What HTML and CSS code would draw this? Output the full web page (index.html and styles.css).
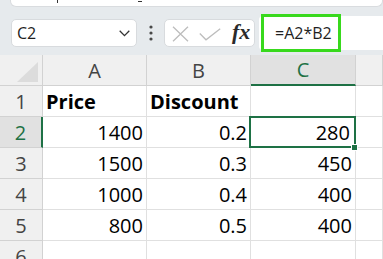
FILE: index.html
```html
<!DOCTYPE html>
<html>
<head>
<meta charset="utf-8">
<link rel="stylesheet" href="styles.css">
</head>
<body>
<div class="toolbar">
  <div class="top-panel"><span class="mark mark-a"></span><span class="mark mark-b"></span></div>
  <div class="bar">
    <div class="namebox">
      <span class="name">C2</span>
      <svg class="chev" width="11" height="7" viewBox="0 0 11 7"><polyline points="0.7,0.8 5.5,5.6 10.3,0.8" fill="none" stroke="#333" stroke-width="1.3"/></svg>
    </div>
    <svg class="dots" width="4" height="16" viewBox="0 0 4 16"><circle cx="2" cy="2" r="1.6" fill="#484848"/><circle cx="2" cy="8" r="1.6" fill="#484848"/><circle cx="2" cy="14" r="1.6" fill="#484848"/></svg>
    <div class="fxbox">
      <svg class="ico-x" width="17" height="16" viewBox="0 0 17 16"><path d="M1 0.7 L16 15.3 M16 0.7 L1 15.3" stroke="#bdbdbd" stroke-width="1.3" fill="none"/></svg>
      <svg class="ico-check" width="22" height="13" viewBox="0 0 22 13"><polyline points="0.8,5.5 7,11.8 21.2,0.8" stroke="#bdbdbd" stroke-width="1.3" fill="none"/></svg>
      <span class="fx">fx</span>
    </div>
    <div class="formula">
      <div class="highlight">=A2*B2</div>
    </div>
  </div>
</div>
<div class="grid">
  <div class="corner"><span class="tri"></span></div>
  <div class="colhead">A</div>
  <div class="colhead">B</div>
  <div class="colhead sel">C</div>
  <div class="colhead"></div>

  <div class="rowhead">1</div>
  <div class="cell bold">Price</div>
  <div class="cell bold">Discount</div>
  <div class="cell"></div>
  <div class="cell"></div>

  <div class="rowhead sel">2</div>
  <div class="cell num">1400</div>
  <div class="cell num">0.2</div>
  <div class="cell num active">280</div>
  <div class="cell"></div>

  <div class="rowhead">3</div>
  <div class="cell num">1500</div>
  <div class="cell num">0.3</div>
  <div class="cell num">450</div>
  <div class="cell"></div>

  <div class="rowhead">4</div>
  <div class="cell num">1000</div>
  <div class="cell num">0.4</div>
  <div class="cell num">400</div>
  <div class="cell"></div>

  <div class="rowhead">5</div>
  <div class="cell num">800</div>
  <div class="cell num">0.5</div>
  <div class="cell num">400</div>
  <div class="cell"></div>

  <div class="rowhead">6</div>
  <div class="cell"></div>
  <div class="cell"></div>
  <div class="cell"></div>
  <div class="cell"></div>
</div>
</body>
</html>
```
FILE: styles.css
```css
html, body {
  margin: 0;
  padding: 0;
  width: 383px;
  height: 259px;
  overflow: hidden;
  background: #ffffff;
  font-family: "Open Sans", "Noto Sans", sans-serif;
}

.toolbar {
  height: 55px;
  background: #e6eaed;
  box-sizing: border-box;
  overflow: hidden;
}

.top-panel {
  box-sizing: border-box;
  margin-left: 10px;
  width: 373px;
  height: 7px;
  background: #ffffff;
  border: 1px solid #d9dcdf;
  border-top: none;
  border-radius: 0 0 6px 6px;
  display: flex;
  align-items: flex-start;
}

.mark {
  display: block;
  background: #333;
}
.mark-a {
  margin-left: 46px;
  width: 1px;
  height: 3px;
}
.mark-b {
  margin-left: 80px;
  margin-top: 1px;
  width: 4px;
  height: 1px;
}

.bar {
  display: flex;
  align-items: center;
  height: 38px;
  margin-top: 7px;
  padding-left: 11px;
}

.namebox {
  box-sizing: border-box;
  width: 126px;
  height: 28px;
  background: #ffffff;
  border: 1px solid #d8dbde;
  border-radius: 5px;
  display: flex;
  align-items: center;
  justify-content: space-between;
  padding: 0 6px 0 5px;
}

.name {
  font-size: 16px;
  color: #1f1f1f;
}

.chev {
  margin-top: 1px;
}

.dots {
  margin-left: 12px;
  margin-right: 11px;
}

.fxbox {
  box-sizing: border-box;
  width: 91px;
  height: 28px;
  background: #ffffff;
  border: 1px solid #d8dbde;
  border-radius: 5px;
  display: flex;
  align-items: center;
  padding-left: 7px;
}

.ico-x {
  margin-top: 1px;
}

.ico-check {
  margin-left: 10px;
  margin-top: 2px;
}

.fx {
  margin-left: 11px;
  font-family: "Liberation Serif", "DejaVu Serif", serif;
  font-style: italic;
  font-weight: 700;
  font-size: 22px;
  line-height: 1;
  color: #2a2a2a;
  margin-top: -3px;
}

.formula {
  flex: 1;
  height: 34px;
  margin-left: 4px;
  background: #ffffff;
  border-radius: 4px 0 0 4px;
  display: flex;
  align-items: center;
}

.highlight {
  box-sizing: border-box;
  flex: none;
  width: 80px;
  height: 38px;
  margin-left: 2px;
  border: 3px solid #38d91d;
  display: flex;
  align-items: center;
  padding-left: 11px;
  font-size: 16px;
  color: #1f1f1f;
}

.grid {
  display: grid;
  grid-template-columns: 43px 104px 104px 105px 27px;
  grid-auto-rows: 31px;
}

.grid > div {
  box-sizing: border-box;
  border-right: 1px solid #e0e0e0;
  border-bottom: 1px solid #e0e0e0;
  display: flex;
  align-items: center;
}

.corner {
  background: #f0f0f0;
  position: relative;
  justify-content: flex-end;
  align-items: flex-end !important;
  border-right-color: #d2d2d2 !important;
  border-bottom-color: #d2d2d2 !important;
  padding: 0 4px 3px 0;
}

.tri {
  display: block;
  width: 0;
  height: 0;
  border-left: 21px solid transparent;
  border-bottom: 20px solid #dcdcdc;
}

.colhead {
  background: #f0f0f0;
  justify-content: center;
  font-size: 20px;
  color: #444444;
  border-right-color: #d2d2d2 !important;
  border-bottom-color: #d2d2d2 !important;
}

.colhead.sel {
  background: #e1e1e1;
  color: #1e7145;
  border-bottom: 2px solid #1e7145 !important;
}

.rowhead {
  background: #f0f0f0;
  justify-content: center;
  font-size: 20px;
  color: #444444;
  border-right-color: #d2d2d2 !important;
  border-bottom-color: #d2d2d2 !important;
}

.rowhead.sel {
  background: #e1e1e1;
  color: #1e7145;
  border-right: 2px solid #1e7145 !important;
}

.cell {
  font-size: 20px;
  color: #000000;
  padding: 0 3px;
  white-space: nowrap;
}

.cell.bold {
  font-weight: 700;
  padding-left: 3px;
}

.cell.num {
  justify-content: flex-end;
  padding-right: 3px;
}

.cell.active {
  position: relative;
  padding-right: 5px;
}

.cell.active::after {
  content: "";
  position: absolute;
  left: -2px;
  right: -1px;
  top: -1px;
  bottom: -1px;
  border: 2px solid #1e7145;
}

.cell.active::before {
  content: "";
  position: absolute;
  right: -3px;
  bottom: -4px;
  width: 5px;
  height: 5px;
  background: #1e7145;
  border: 1px solid #ffffff;
  z-index: 2;
}
```
